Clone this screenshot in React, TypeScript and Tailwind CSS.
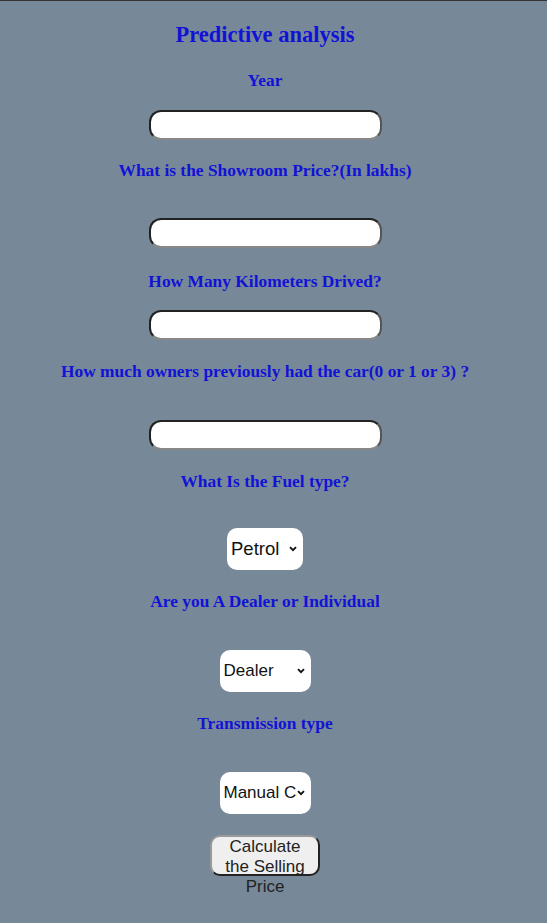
import React from "react";

const label = "block text-center font-bold text-[17.4px] leading-[20px] text-[#1212d6] [font-family:'Liberation_Serif',serif]";
const input =
  "block h-[30px] w-[233px] rounded-[12px] border-2 border-t-[#222] border-l-[#222] border-r-[#555] border-b-[#888] bg-white px-2 text-[14px] outline-none";
const select =
  "block h-[42px] w-full appearance-none overflow-hidden rounded-[10px] bg-white pl-[4px] pr-[14px] text-[#111] outline-none [font-family:'Liberation_Sans',sans-serif]";

function Chevron() {
  return (
    <svg
      className="pointer-events-none absolute right-[6px] top-1/2 -translate-y-1/2"
      width="8"
      height="6"
      viewBox="0 0 8 6"
      fill="none"
    >
      <path d="M1 1.2 L4 4.2 L7 1.2" stroke="#111" strokeWidth="1.9" />
    </svg>
  );
}

export default function App() {
  return (
    <div className="min-h-[923px] border-t border-[#333] bg-[#778899]">
      <div className="flex w-[530px] flex-col items-center">
        <h2 className="mt-[21px] text-[22.5px] leading-[26px] font-bold text-[#1212d6] [font-family:'Liberation_Serif',serif]">
          Predictive analysis
        </h2>
        <label className={`${label} mt-[22px]`}>Year</label>
        <input className={`${input} mt-[20px]`} type="text" />

        <label className={`${label} mt-[20px]`}>What is the Showroom Price?(In lakhs)</label>
        <input className={`${input} mt-[38px]`} type="text" />

        <label className={`${label} mt-[23px]`}>How Many Kilometers Drived?</label>
        <input className={`${input} mt-[19px]`} type="text" />

        <label className={`${label} mt-[21px]`}>How much owners previously had the car(0 or 1 or 3) ?</label>
        <input className={`${input} mt-[39px]`} type="text" />

        <label className={`${label} mt-[21px]`}>What Is the Fuel type?</label>
        <div className="relative mt-[37px] w-[76px]">
          <select className={`${select} text-[18.5px]`} defaultValue="Petrol">
            <option>Petrol</option>
            <option>Diesel</option>
            <option>CNG</option>
          </select>
          <Chevron />
        </div>

        <label className={`${label} mt-[21px]`}>Are you A Dealer or Individual</label>
        <div className="relative mt-[39px] w-[91px]">
          <select className={`${select} h-[41px] text-[17px]`} defaultValue="Dealer">
            <option>Dealer</option>
            <option>Individual</option>
          </select>
          <Chevron />
        </div>

        <label className={`${label} mt-[21px]`}>Transmission type</label>
        <div className="relative mt-[39px] w-[91px]">
          <select className={`${select} h-[41px] text-[17px]`} defaultValue="Manual Car">
            <option>Manual Car</option>
            <option>Automatic Car</option>
          </select>
          <Chevron />
        </div>

        <button
          type="button"
          className="mt-[21px] flex h-[41px] w-[110px] items-start justify-center rounded-[10px] border-2 border-t-[#999] border-l-[#999] border-r-[#222] border-b-[#222] bg-[#efefef] px-[8px] text-[17px] leading-[20px] text-[#222] [font-family:'Liberation_Sans',sans-serif]"
        >
          <span className="block">Calculate the Selling Price</span>
        </button>
      </div>
    </div>
  );
}
